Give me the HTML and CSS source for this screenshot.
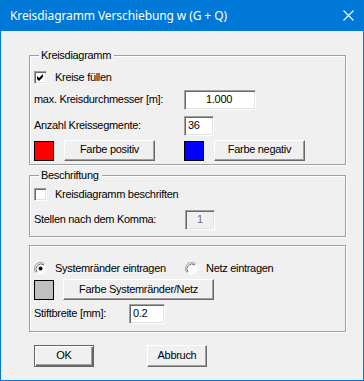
FILE: index.html
```html
<!DOCTYPE html>
<html>
  <head>
    <title>Kreisdiagramm Verschiebung w (G + Q)</title>
    <link rel="stylesheet" href="styles.css">
  </head>
  <body>
    <div class="window">
      <div class="titlebar">
        <span class="title">Kreisdiagramm Verschiebung w (G + Q)</span>
        <svg class="close" width="11" height="11" viewBox="0 0 11 11">
          <path d="M0.5 0.5 L10.5 10.5 M10.5 0.5 L0.5 10.5" stroke="#fff" stroke-width="1.1" fill="none" />
        </svg>
      </div>

      <div class="content">
        <div class="group g1">
          <span class="legend">Kreisdiagramm</span>
          <div class="row row-check">
            <span class="checkbox">
              <svg width="7" height="7" viewBox="0 0 7 7"><polygon points="0,2 2,4 6,0 6,3 2,7 0,5" fill="#000" /></svg>
            </span>
            <span class="opt-label">Kreise füllen</span>
          </div>
          <div class="row row-field">
            <span class="label col-150">max. Kreisdurchmesser [m]:</span>
            <span class="field field-wide">1.000</span>
          </div>
          <div class="row row-field row-mid">
            <span class="label col-150">Anzahl Kreissegmente:</span>
            <span class="field field-small">36</span>
          </div>
          <div class="row row-colors">
            <div class="color-cell col-150">
              <span class="swatch red"></span>
              <button class="btn btn-color">Farbe positiv</button>
            </div>
            <div class="color-cell">
              <span class="swatch blue"></span>
              <button class="btn btn-color">Farbe negativ</button>
            </div>
          </div>
        </div>

        <div class="group g2">
          <span class="legend">Beschriftung</span>
          <div class="row row-check">
            <span class="checkbox"></span>
            <span class="opt-label">Kreisdiagramm beschriften</span>
          </div>
          <div class="row row-field row-low">
            <span class="label col-151">Stellen nach dem Komma:</span>
            <span class="field field-small disabled">1</span>
          </div>
        </div>

        <div class="group g3">
          <div class="row row-check">
            <div class="radio-cell col-151">
              <svg class="radio" width="13" height="13" viewBox="0 0 13 13">
                <path d="M2.2 10.8 A6 6 0 0 1 10.8 2.2" stroke="#a0a0a0" fill="none" />
                <path d="M10.8 2.2 A6 6 0 0 1 2.2 10.8" stroke="#fff" fill="none" />
                <circle cx="6.5" cy="6.5" r="5" fill="#fff" />
                <path d="M3 10 A5 5 0 0 1 10 3" stroke="#696969" fill="none" />
                <circle cx="6.5" cy="6.5" r="2" fill="#000" />
              </svg>
              <span class="opt-label">Systemränder eintragen</span>
            </div>
            <div class="radio-cell">
              <svg class="radio" width="13" height="13" viewBox="0 0 13 13">
                <path d="M2.2 10.8 A6 6 0 0 1 10.8 2.2" stroke="#a0a0a0" fill="none" />
                <path d="M10.8 2.2 A6 6 0 0 1 2.2 10.8" stroke="#fff" fill="none" />
                <circle cx="6.5" cy="6.5" r="5" fill="#fff" />
                <path d="M3 10 A5 5 0 0 1 10 3" stroke="#696969" fill="none" />
              </svg>
              <span class="opt-label">Netz eintragen</span>
            </div>
          </div>
          <div class="row row-colors row-sys">
            <span class="swatch gray"></span>
            <button class="btn btn-system">Farbe Systemränder/Netz</button>
          </div>
          <div class="row row-field row-pen">
            <span class="label col-95">Stiftbreite [mm]:</span>
            <span class="field field-pen">0.2</span>
          </div>
        </div>

        <div class="actions">
          <button class="btn btn-action btn-default">OK</button>
          <button class="btn btn-action">Abbruch</button>
        </div>
      </div>
    </div>
  </body>
</html>
```

FILE: styles.css
```css
body {
  margin: 0;
  background: #f0f0f0;
  font-family: "Liberation Sans", Arial, sans-serif;
  font-size: 11px;
  letter-spacing: -0.3px;
  color: #000;
}

.window {
  box-sizing: border-box;
  width: 364px;
  height: 381px;
  border: 1px solid #0078d7;
  border-top: none;
  background: #f0f0f0;
}

.titlebar {
  height: 31px;
  margin: 0 -1px;
  background: #0078d7;
  display: flex;
  align-items: center;
  justify-content: space-between;
  padding: 0 10px 0 10px;
}

.title {
  font-family: "Noto Sans", sans-serif;
  font-size: 12px;
  letter-spacing: -0.1px;
  color: #fff;
  margin-top: -1px;
}

.close {
  margin-top: -1px;
}

.content {
  padding: 24px 0 0 28px;
}

/* group boxes */
.group {
  position: relative;
  box-sizing: border-box;
  width: 317px;
  border: 1px solid #a0a0a0;
  box-shadow: 1px 1px 0 #fff, inset 1px 1px 0 #fff;
  padding-left: 4px;
}

.g1 {
  height: 110px;
  padding-top: 15px;
}

.g2 {
  height: 62px;
  margin-top: 10px;
  padding-top: 12px;
}

.g3 {
  height: 87px;
  margin-top: 8px;
  padding-top: 16px;
}

.legend {
  position: absolute;
  top: -8px;
  left: 9px;
  padding: 0 3px 0 2px;
  background: #f0f0f0;
  line-height: 14px;
}

.row {
  display: flex;
  align-items: center;
}

.row-check {
  height: 13px;
}

.row-field {
  height: 20px;
  margin-top: 6px;
}

.row-low {
  margin-top: 9px;
}

.row-colors {
  height: 21px;
  margin-top: 4px;
}

.row-pen {
  margin-top: 4px;
}

.label {
  margin-top: -3px;
}

.col-150 {
  width: 150px;
  flex: none;
}

.col-151 {
  width: 151px;
  flex: none;
}

.col-95 {
  width: 95px;
  flex: none;
}

/* inputs */
.checkbox {
  box-sizing: border-box;
  width: 13px;
  height: 13px;
  background: #fff;
  border: 1px solid;
  border-color: #a0a0a0 #fff #fff #a0a0a0;
  box-shadow: inset 1px 1px #696969, inset -1px -1px #e3e3e3;
  display: flex;
  align-items: center;
  justify-content: center;
  flex: none;
}

.opt-label {
  margin-left: 8px;
  margin-top: -1px;
}

.radio-cell {
  display: flex;
  align-items: center;
}

.radio {
  flex: none;
}

.field {
  box-sizing: border-box;
  height: 20px;
  background: #fff;
  border: 1px solid;
  border-color: #a0a0a0 #fff #fff #a0a0a0;
  box-shadow: inset 1px 1px #696969, inset -1px -1px #e3e3e3;
  display: flex;
  align-items: center;
  padding: 0 3px 2px 3px;
  flex: none;
}

.field-wide {
  width: 72px;
  justify-content: center;
  padding-right: 5px;
}

.field-small {
  width: 30px;
}

.field-pen {
  width: 36px;
}

.disabled {
  background: #f0f0f0;
  color: #6d6d6d;
  justify-content: center;
}

.swatch {
  box-sizing: border-box;
  width: 20px;
  height: 20px;
  border: 1px solid #000;
  flex: none;
  margin-top: 1px;
}

.red {
  background: #ff0000;
}

.blue {
  background: #0000ff;
}

.gray {
  background: #c0c0c0;
}

.color-cell {
  display: flex;
  align-items: center;
}

/* buttons */
.btn {
  box-sizing: border-box;
  height: 21px;
  padding: 0 0 2px 0;
  background: #f0f0f0;
  border: 1px solid;
  border-color: #fff #696969 #696969 #fff;
  box-shadow: inset -1px -1px #a0a0a0;
  font: inherit;
  letter-spacing: inherit;
  color: #000;
  display: flex;
  align-items: center;
  justify-content: center;
}

.btn-color {
  width: 91px;
  margin-left: 10px;
  margin-top: -1px;
}

.btn-system {
  width: 151px;
  margin-left: 9px;
}

.actions {
  display: flex;
  gap: 53px;
  margin-top: 13px;
  padding-left: 5px;
}

.btn-action {
  width: 60px;
  height: 22px;
}

.btn-default {
  border-color: #646464;
  box-shadow: inset 1px 1px #fff, inset -1px -1px #696969, inset -2px -2px #a0a0a0;
}
```
